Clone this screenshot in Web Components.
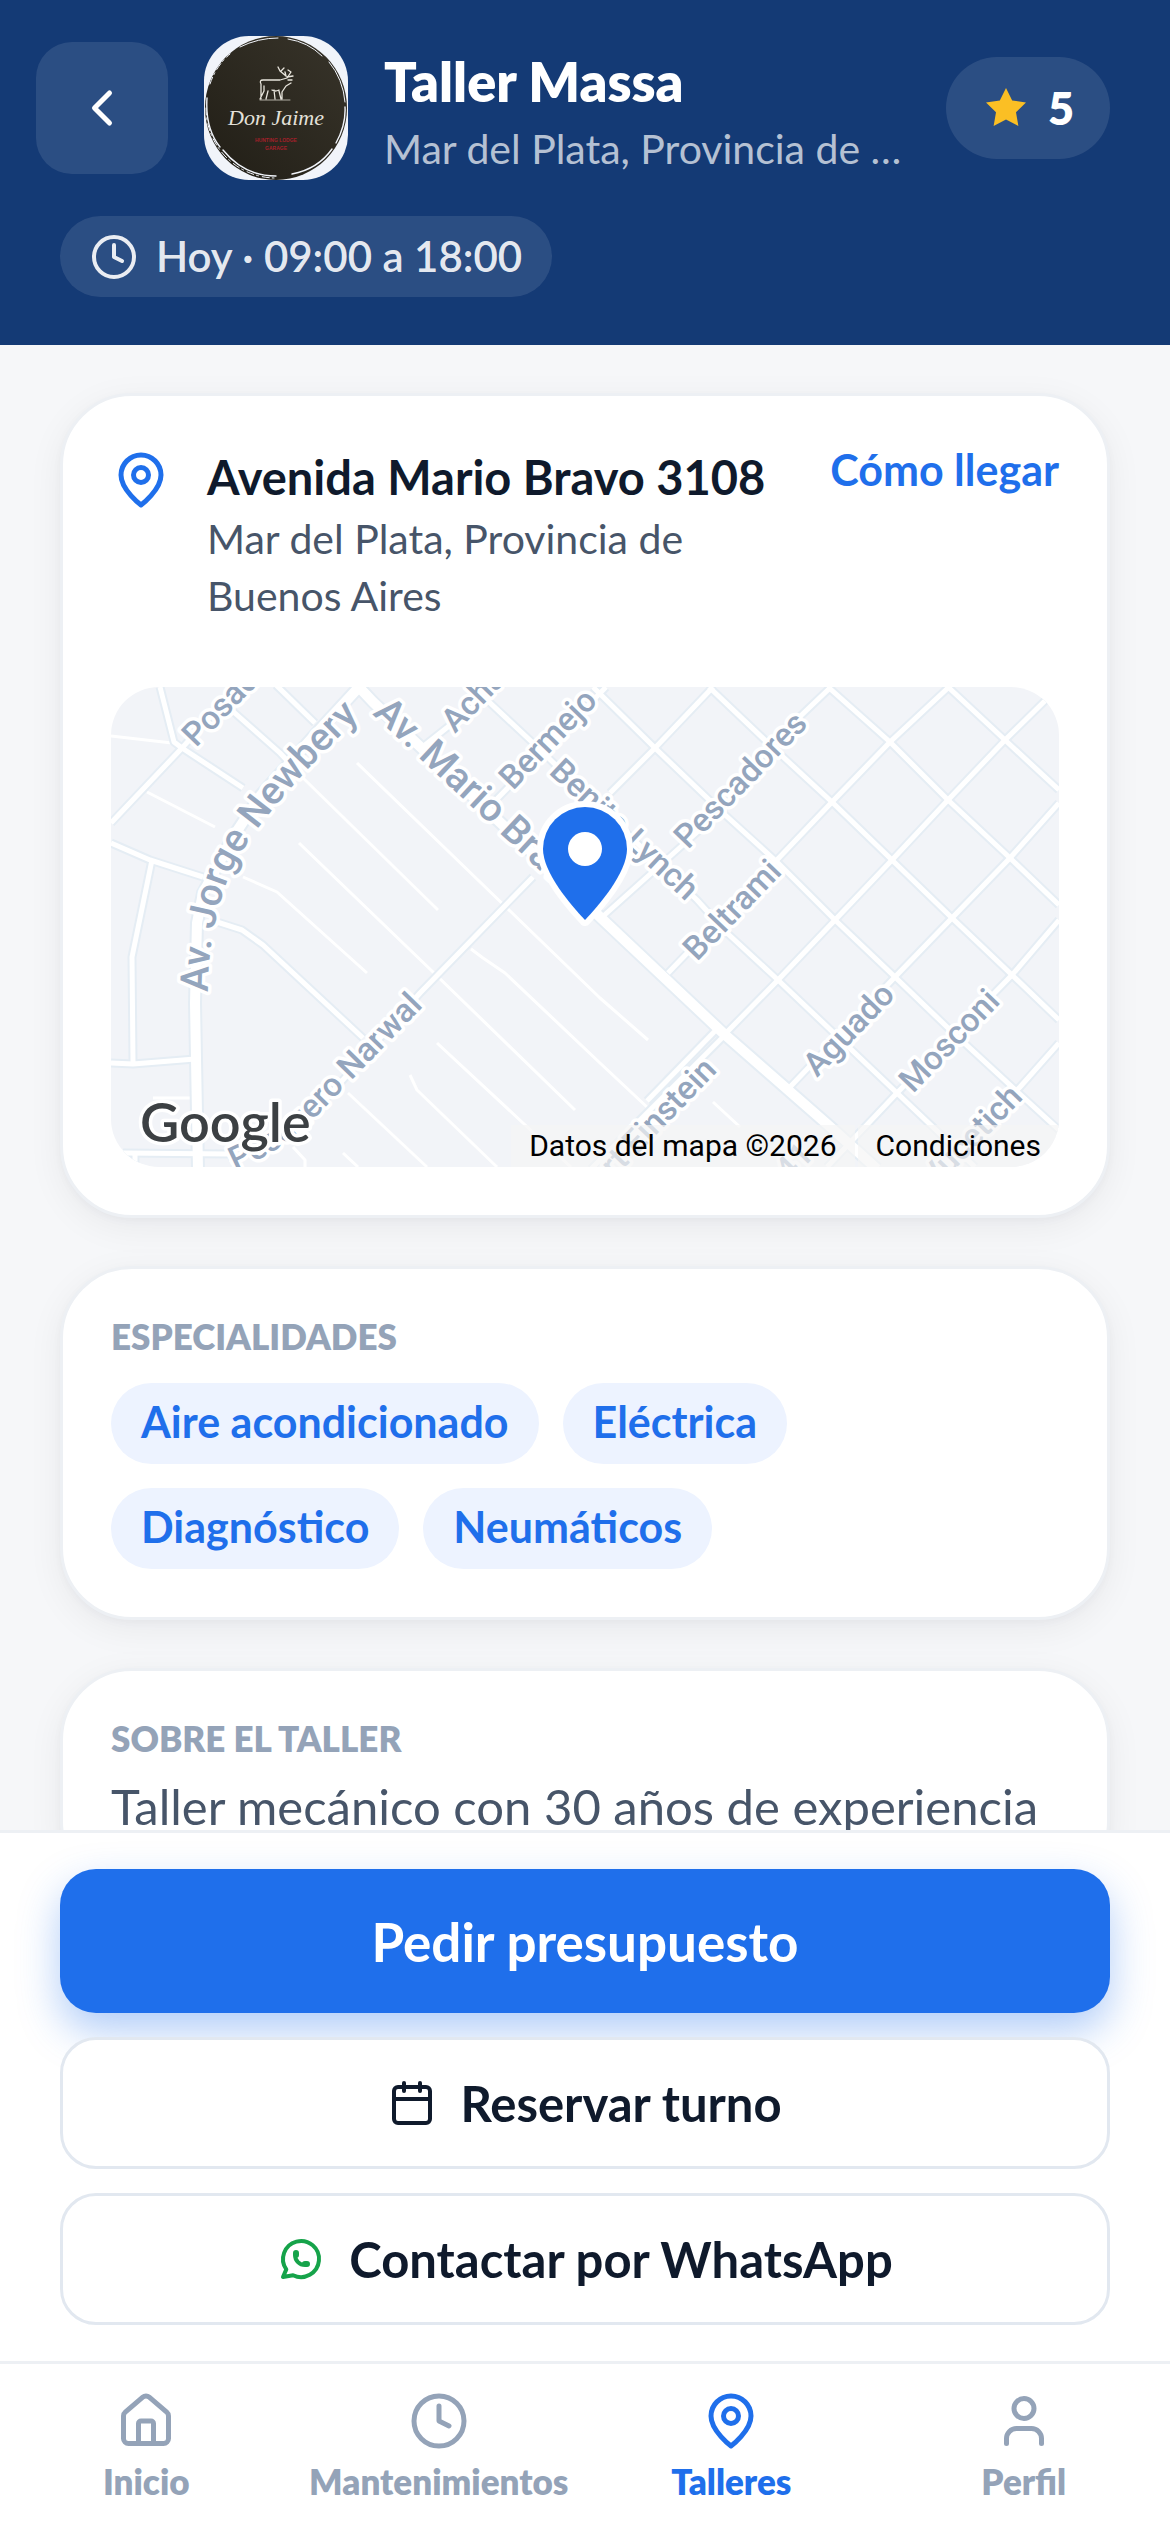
<!DOCTYPE html>
<html lang="es">
<head>
<meta charset="utf-8">
<meta name="viewport" content="width=device-width, initial-scale=1">
<title>Taller Massa</title>
<style>
  :root {
    --brand: #1f6feb;
    --brand-dark: #143a75;
    --brand-soft: #edf3ff;
    --ink: #0f1a2c;
    --ink-soft: #475569;
    --muted: #94a3b8;
    --line: #edf0f4;
    --line-strong: #e2e8f0;
    --page: #f6f7f9;
  }
  body {
    margin: 0;
    font-family: Lato, "Open Sans", sans-serif;
    color: var(--ink);
    background: var(--page);
  }
</style>
</head>
<body>
<app-shell>
  <shop-header slot="header" name="Taller Massa" place="Mar del Plata, Provincia de Buenos Aires" rating="5">
    <shop-logo slot="logo"></shop-logo>
    Hoy · 09:00 a 18:00
  </shop-header>

  <info-card>
    <shop-address street="Avenida Mario Bravo 3108" place="Mar del Plata, Provincia de Buenos Aires"></shop-address>
    <shop-map></shop-map>
  </info-card>

  <info-card heading="ESPECIALIDADES">
    <chip-list>
      <tag-chip>Aire acondicionado</tag-chip>
      <tag-chip>Eléctrica</tag-chip>
      <tag-chip>Diagnóstico</tag-chip>
      <tag-chip>Neumáticos</tag-chip>
    </chip-list>
  </info-card>

  <info-card heading="SOBRE EL TALLER">
    <about-text>Taller mecánico con 30 años de experiencia</about-text>
  </info-card>

  <action-bar slot="footer">
    <action-button variant="primary">Pedir presupuesto</action-button>
    <action-button icon="calendar">Reservar turno</action-button>
    <action-button icon="whatsapp">Contactar por WhatsApp</action-button>
  </action-bar>

  <tab-bar slot="footer">
    <tab-item icon="home">Inicio</tab-item>
    <tab-item icon="clock">Mantenimientos</tab-item>
    <tab-item icon="pin" active>Talleres</tab-item>
    <tab-item icon="user">Perfil</tab-item>
  </tab-bar>
</app-shell>

<script>
/** Stroke icons on a 24x24 grid. */
const ICONS = {
  back: '<path d="m15 18-6-6 6-6"/>',
  clock: '<circle cx="12" cy="12" r="10"/><path d="M12 6v6l4 2"/>',
  pin: '<path d="M20 10c0 6-8 12-8 12s-8-6-8-12a8 8 0 0 1 16 0Z"/><circle cx="12" cy="10" r="3"/>',
  home: '<path d="M15 21v-8a1 1 0 0 0-1-1h-4a1 1 0 0 0-1 1v8"/><path d="M3 10a2 2 0 0 1 .709-1.528l7-5.999a2 2 0 0 1 2.582 0l7 5.999A2 2 0 0 1 21 10v9a2 2 0 0 1-2 2H5a2 2 0 0 1-2-2z"/>',
  user: '<path d="M19 21v-2a4 4 0 0 0-4-4H9a4 4 0 0 0-4 4v2"/><circle cx="12" cy="7" r="4"/>',
  calendar: '<path d="M8 2v4"/><path d="M16 2v4"/><rect width="18" height="18" x="3" y="4" rx="2"/><path d="M3 10h18"/>',
  whatsapp: '<path d="M3 21l1.65-3.8a9 9 0 1 1 3.4 2.9L3 21"/><path d="M9 10a.5.5 0 0 0 1 0V9a.5.5 0 0 0-1 0v1a5 5 0 0 0 5 5h1a.5.5 0 0 0 0-1h-1a.5.5 0 0 0 0 1"/>',
  star: '<path fill="currentColor" stroke="none" d="M12 2l3.09 6.26L22 9.27l-5 4.87 1.18 6.88L12 17.77l-6.18 3.25L7 14.14 2 9.27l6.91-1.01z"/>',
};

/** Base class: attaches an open shadow root and fills it. */
class BaseElement extends HTMLElement {
  connectedCallback() {
    if (this.shadowRoot) return;
    this.attachShadow({ mode: 'open' });
    this.shadowRoot.innerHTML = `<style>${this.constructor.styles}</style>${this.render()}`;
  }

  attr(name) {
    return this.getAttribute(name) || '';
  }
}

class UiIcon extends BaseElement {
  static styles = `
    :host { display: inline-flex; flex: none; width: var(--icon-size, 48px); height: var(--icon-size, 48px); }
    svg { width: 100%; height: 100%; fill: none; stroke: currentColor; stroke-width: 2; stroke-linecap: round; stroke-linejoin: round; }
  `;

  render() {
    return `<svg viewBox="0 0 24 24" aria-hidden="true">${ICONS[this.attr('name')]}</svg>`;
  }
}

class AppShell extends BaseElement {
  static styles = `
    :host { display: flex; flex-direction: column; height: 100vh; }
    main {
      flex: 1;
      min-height: 0;
      box-sizing: border-box;
      overflow-y: auto;
      scrollbar-width: none;
      padding: 48px 60px;
      display: flex;
      flex-direction: column;
      gap: 48px;
    }
  `;

  render() {
    return `
      <slot name="header"></slot>
      <main><slot></slot></main>
      <slot name="footer"></slot>
    `;
  }
}

class ShopHeader extends BaseElement {
  static styles = `
    :host { display: block; background: var(--brand-dark); color: #fff; padding: 36px 60px 48px 36px; }
    .top { display: flex; align-items: center; gap: 36px; }
    button {
      flex: none;
      display: flex;
      align-items: center;
      justify-content: center;
      width: 132px;
      height: 132px;
      padding: 0;
      border: 0;
      border-radius: 36px;
      background: rgba(255, 255, 255, .1);
      color: inherit;
      --icon-size: 60px;
    }
    .who { flex: 1; min-width: 0; display: flex; flex-direction: column; gap: 6px; }
    h1, p { margin: 0; white-space: nowrap; overflow: hidden; text-overflow: ellipsis; }
    h1 { font-size: 54px; line-height: 75px; font-weight: 800; }
    p { font-size: 41px; line-height: 48px; color: rgba(255, 255, 255, .7); }
    .rating {
      flex: none;
      box-sizing: border-box;
      display: flex;
      align-items: center;
      gap: 18px;
      height: 102px;
      padding: 0 36px;
      border-radius: 51px;
      background: rgba(255, 255, 255, .1);
      font-size: 45px;
      font-weight: 800;
    }
    .rating ui-icon { color: #fbbf24; }
    .hours {
      display: inline-flex;
      align-items: center;
      gap: 18px;
      margin: 36px 0 0 24px;
      padding: 12px 30px;
      border-radius: 42px;
      background: rgba(255, 255, 255, .1);
      color: rgba(255, 255, 255, .9);
      font-size: 42px;
      line-height: 57px;
      font-weight: 600;
      vertical-align: top;
    }
  `;

  render() {
    return `
      <div class="top">
        <button type="button" aria-label="Volver"><ui-icon name="back"></ui-icon></button>
        <slot name="logo"></slot>
        <div class="who">
          <h1>${this.attr('name')}</h1>
          <p>${this.attr('place')}</p>
        </div>
        <div class="rating"><ui-icon name="star"></ui-icon><span>${this.attr('rating')}</span></div>
      </div>
      <div class="hours"><ui-icon name="clock"></ui-icon><span><slot></slot></span></div>
    `;
  }
}

class ShopLogo extends BaseElement {
  static styles = `
    :host { display: block; flex: none; width: 144px; height: 144px; border-radius: 45px; overflow: hidden; background: #f1f4fa; }
    svg { display: block; width: 100%; height: 100%; }
    .name { font: italic 22px "Liberation Serif", serif; fill: #e4e1da; }
    .small { font: 700 5px "Liberation Sans", sans-serif; fill: #a3202a; }
  `;

  render() {
    return `
      <svg viewBox="0 0 144 144">
        <defs>
          <linearGradient id="disc" x1="0" y1="1" x2="1" y2="0">
            <stop offset="0" stop-color="#211e16"/><stop offset="1" stop-color="#38342a"/>
          </linearGradient>
        </defs>
        <ellipse cx="72" cy="72" rx="71" ry="72" fill="url(#disc)"/>
        <g fill="none" stroke="#f1f4fa" stroke-linecap="round">
          <path stroke-width="1" d="M36 11Q54 2 74 2M84 3q20 3 34 17M125 26q14 17 16 40"/>
          <path stroke-width="1.4" d="M3 62Q1 92 16 111M19 114q21 26 53 26M88 138q26-5 40-25M132 107q10-18 9-36"/>
          <path stroke-width="1" stroke-dasharray="7 3 2 4" d="M2 72A70 70 0 0 0 70 142M6 48Q12 30 26 18"/>
        </g>
        <g fill="none" stroke="#e8e5dc" stroke-width="1.3" stroke-linecap="round" stroke-linejoin="round">
          <path d="M57 63V48q-2-4 2-4h17l7-2 4-6-3-2M87 47l-5 3-4 6v7M60 50v5l-4 8M64 55l-2 8M68 54q3 2 7 0M70 54l1 9M75 55l2 8"/>
          <path d="M82 40l-6-5-2-4M77 35l3-3M82 40l-1-4M83 41l6-1M84 44h4"/>
          <path stroke-width="1" opacity=".7" d="M56 64h30"/>
        </g>
        <text class="name" x="72" y="89" text-anchor="middle">Don Jaime</text>
        <text class="small" x="72" y="106" text-anchor="middle">HUNTING LODGE</text>
        <text class="small" x="72" y="114" text-anchor="middle">GARAGE</text>
      </svg>
    `;
  }
}

class InfoCard extends BaseElement {
  static styles = `
    :host {
      display: block;
      padding: 48px;
      background: #fff;
      border: 3px solid var(--line);
      border-radius: 72px;
      box-shadow: 0 3px 9px rgba(15, 23, 42, .03), 0 9px 36px rgba(15, 23, 42, .06);
    }
    h2 { margin: 0; font-size: 35px; line-height: 39px; font-weight: 800; color: var(--muted); }
  `;

  render() {
    const heading = this.attr('heading');
    return `${heading ? `<h2>${heading}</h2>` : ''}<slot></slot>`;
  }
}

class ShopAddress extends BaseElement {
  static styles = `
    :host { display: flex; align-items: flex-start; gap: 36px; margin-bottom: 63px; }
    ui-icon { --icon-size: 60px; color: var(--brand); padding-top: 6px; }
    div { flex: 1; min-width: 0; }
    h2, p { margin: 0; }
    h2 { font-size: 47px; line-height: 66px; font-weight: 700; }
    p { font-size: 41px; line-height: 57px; color: var(--ink-soft); }
    a { flex: none; font-size: 43px; line-height: 51px; font-weight: 700; color: var(--brand); text-decoration: none; }
  `;

  render() {
    return `
      <ui-icon name="pin"></ui-icon>
      <div><h2>${this.attr('street')}</h2><p>${this.attr('place')}</p></div>
      <a href="#como-llegar">Cómo llegar</a>
    `;
  }
}

/** Streets as polylines in map units (948 x 480). */
const STREETS = {
  alley: [
    '0,49 61,56', '36,105 104,140', '42,411 79,411', '132,190 166,205 256,286',
    '189,88 327,223', '360,262 372,271 394,286 489,376 537,421', '246,76 489,311 537,353',
    '188,156 322,285 464,423', '326,356 412,436 460,480', '299,388 306,403 386,480',
    '237,406 316,480', '182,460 194,473 194,480', '232,466 247,480', '602,415 629,440',
  ],
  street: [
    '49,0 63,55 71,61 132,101', '0,136 71,61 130,-4', '117,20 169,66 190,88', '165,-2 204,36',
    '0,156 39,173 92,190', '41,173 21,270 22,375', '0,376 22,377 84,372', '12,466 119,467', '24,466 24,480',
    '106,235 131,243 152,258 252,351', '422,190 309,306 199,430 119,476',
    '400,-10 314,58', '495,0 382,116', '362,0 422,56 486,118 586,213 616,246 667,293 786,406 864,480',
    '482,0 544,61 612,126 666,175 724,233 784,290 836,340 912,410 948,443',
    '598,0 657,56 721,115 781,173 841,231 901,288 948,333',
    '717,0 779,55 837,113 899,171 948,218', '837,0 894,53 948,103',
    '602,0 544,61 499,106', '720,0 657,60 612,122 489,232', '838,0 779,55 721,115 664,175 557,286',
    '948,0 894,53 837,113 781,173 724,233 667,293 616,345', '948,116 899,171 841,231 784,290 679,400',
    '948,233 901,288 786,406 716,480', '948,356 909,400 830,480', '612,350 536,426 480,482',
    '604,344 536,414',
  ],
  avenue: [
    '246,-2 262,15 489,230 612,346 716,437 766,482',
    '248,0 202,50 150,108 122,150 92,206 86,236 84,316 87,482',
  ],
};

class ShopMap extends BaseElement {
  static styles = `
    :host { display: block; position: relative; height: 480px; border-radius: 48px; overflow: hidden; background: #f2f4f8; }
    svg { display: block; width: 100%; height: 100%; }
    polyline { fill: none; stroke-linejoin: round; }
    .edge { stroke: #e5edf4; }
    .road { stroke: #fff; }
    .alley { stroke-width: 3; }
    .edge.street { stroke-width: 9; }
    .road.street { stroke-width: 5; }
    .edge.avenue { stroke-width: 14; }
    .road.avenue { stroke-width: 10; }
    text { font: 500 33px Roboto, sans-serif; fill: #94a5bd; stroke: #fff; stroke-width: 7; stroke-linejoin: round; paint-order: stroke; }
    text.wide { font-size: 39px; }
    text.logo { font: 600 54px Lato, sans-serif; fill: #3c4043; }
    .marker { fill: var(--brand); stroke: #fff; stroke-width: 12; stroke-linejoin: round; paint-order: stroke; }
    footer { position: absolute; right: 0; bottom: 0; display: flex; gap: 3px; font: 400 30px/42px Roboto, sans-serif; color: #000; }
    footer > * { padding: 0 18px; background: rgba(245, 245, 245, .7); color: inherit; text-decoration: none; white-space: nowrap; }
  `;

  lines(kind, layer) {
    return STREETS[kind].map((points) => `<polyline class="${layer} ${kind}" points="${points}"/>`).join('');
  }

  label(name, x, y, angle = -46, extra = '') {
    return `<text transform="translate(${x} ${y}) rotate(${angle})" ${extra}>${name}</text>`;
  }

  render() {
    return `
      <svg viewBox="0 0 948 480" preserveAspectRatio="xMidYMid slice" role="img" aria-label="Mapa">
        <defs>
          <path id="newbery" d="M97 305Q97 240 120 184Q148 128 242 36"/>
          <path id="narwal" d="M124 484Q170 464 199 436L340 291"/>
        </defs>
        ${this.lines('alley', 'road')}
        ${this.lines('street', 'edge')}${this.lines('avenue', 'edge')}
        ${this.lines('street', 'road')}${this.lines('avenue', 'road')}
        ${this.label('Posadas', 85, 61)}
        ${this.label('Acha', 344, 47)}
        ${this.label('Bermejo', 402, 104)}
        ${this.label('Pescadores', 577, 163)}
        ${this.label('Beltrami', 586, 275)}
        ${this.label('Aguado', 706, 391)}
        ${this.label('Mosconi', 802, 407)}
        ${this.label('Vucetich', 913, 411, -46, 'text-anchor="end"')}
        ${this.label('Albert Einstein', 607, 384, -46, 'text-anchor="end"')}
        ${this.label('41', 678, 496)}
        ${this.label('Benito Lynch', 437, 86, 43)}
        ${this.label('Av. Mario Bravo', 261, 27, 43, 'class="wide"')}
        <text class="wide"><textPath href="#newbery">Av. Jorge Newbery</textPath></text>
        <text><textPath href="#narwal">Pesquero Narwal</textPath></text>
        <path class="marker" d="M474 233C460 218 432 186 432 162a42 42 0 0 1 84 0c0 24-28 56-42 71z"/>
        <circle cx="474" cy="162" r="17" fill="#fff"/>
        <text class="logo" x="29" y="455">Google</text>
      </svg>
      <footer><span>Datos del mapa ©2026</span><a href="#condiciones">Condiciones</a></footer>
    `;
  }
}

class ChipList extends BaseElement {
  static styles = `:host { display: flex; flex-wrap: wrap; gap: 24px; margin-top: 27px; }`;

  render() {
    return '<slot></slot>';
  }
}

class TagChip extends BaseElement {
  static styles = `
    :host {
      display: block;
      padding: 10px 30px 14px;
      border-radius: 42px;
      background: var(--brand-soft);
      color: var(--brand);
      font-size: 43px;
      line-height: 57px;
      font-weight: 700;
    }
  `;

  render() {
    return '<slot></slot>';
  }
}

class AboutText extends BaseElement {
  static styles = `
    :host { display: block; margin-top: 12px; }
    p { margin: 0; font-size: 49px; line-height: 72px; color: var(--ink-soft); }
  `;

  render() {
    return '<p><slot></slot></p>';
  }
}

class ActionBar extends BaseElement {
  static styles = `
    :host {
      position: relative;
      display: flex;
      flex-direction: column;
      gap: 24px;
      padding: 36px 60px;
      background: #fff;
      border-top: 3px solid var(--line);
    }
  `;

  render() {
    return '<slot></slot>';
  }
}

class ActionButton extends BaseElement {
  static styles = `
    :host { display: block; position: relative; }
    button {
      box-sizing: border-box;
      display: flex;
      align-items: center;
      justify-content: center;
      gap: 24px;
      width: 100%;
      height: 132px;
      border: 3px solid var(--line-strong);
      border-radius: 36px;
      background: #fff;
      color: var(--ink);
      font: inherit;
      font-size: 49px;
      font-weight: 700;
    }
    :host([variant="primary"]) button {
      height: 144px;
      border: 0;
      background: var(--brand);
      color: #fff;
      font-size: 53px;
      box-shadow: 0 18px 42px rgba(31, 111, 235, .35);
    }
    :host([icon="whatsapp"]) ui-icon { color: #16a34a; }
  `;

  render() {
    const icon = this.attr('icon');
    return `<button type="button">${icon ? `<ui-icon name="${icon}"></ui-icon>` : ''}<slot></slot></button>`;
  }
}

class TabBar extends BaseElement {
  static styles = `
    :host { display: block; background: #fff; border-top: 3px solid var(--line); }
    nav { display: grid; grid-template-columns: repeat(4, 1fr); padding: 27px 0 30px; }
  `;

  render() {
    return '<nav><slot></slot></nav>';
  }
}

class TabItem extends BaseElement {
  static styles = `
    :host { display: block; --icon-size: 60px; color: var(--muted); }
    :host([active]) { color: var(--brand); }
    a {
      display: flex;
      flex-direction: column;
      align-items: center;
      gap: 9px;
      color: inherit;
      font-size: 35px;
      line-height: 42px;
      font-weight: 800;
      text-decoration: none;
    }
  `;

  render() {
    return `<a href="#${this.attr('icon')}"><ui-icon name="${this.attr('icon')}"></ui-icon><span><slot></slot></span></a>`;
  }
}

customElements.define('ui-icon', UiIcon);
customElements.define('app-shell', AppShell);
customElements.define('shop-header', ShopHeader);
customElements.define('shop-logo', ShopLogo);
customElements.define('info-card', InfoCard);
customElements.define('shop-address', ShopAddress);
customElements.define('shop-map', ShopMap);
customElements.define('chip-list', ChipList);
customElements.define('tag-chip', TagChip);
customElements.define('about-text', AboutText);
customElements.define('action-bar', ActionBar);
customElements.define('action-button', ActionButton);
customElements.define('tab-bar', TabBar);
customElements.define('tab-item', TabItem);
</script>
</body>
</html>
